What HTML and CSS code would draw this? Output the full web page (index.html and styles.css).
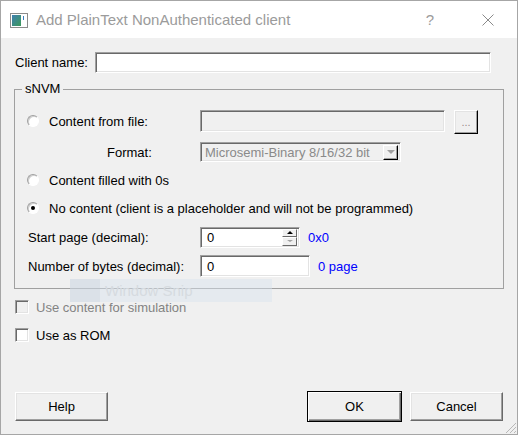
FILE: index.html
```html
<!DOCTYPE html>
<html lang="en">
<head>
  <meta charset="UTF-8">
  <title>Add PlainText NonAuthenticated client</title>
  <link rel="stylesheet" href="styles.css">
</head>
<body>

<div class="window">
  <div class="titlebar">
    <svg class="app-icon" width="18" height="15" viewBox="0 0 18 15">
      <defs>
        <linearGradient id="ig" x1="0" y1="0" x2="1" y2="1">
          <stop offset="0" stop-color="#3f7fb0"/>
          <stop offset="1" stop-color="#3c9a5a"/>
        </linearGradient>
      </defs>
      <rect x="0.5" y="0.5" width="17" height="14" fill="#fff" stroke="#8c8c8c"/>
      <rect x="2" y="2" width="9" height="11" fill="url(#ig)"/>
      <rect x="13" y="3" width="1" height="4" fill="#3a7fc0"/>
    </svg>
    <span class="title">Add PlainText NonAuthenticated client</span>
    <span class="help-btn">?</span>
    <svg class="close-btn" width="12" height="12" viewBox="0 0 12 12">
      <path d="M0.5 0.5 L11.5 11.5 M11.5 0.5 L0.5 11.5" stroke="#8a8a8a" stroke-width="1" fill="none"/>
    </svg>
  </div>

  <div class="client">
    <div class="name-row">
      <label class="name-label">Client name:</label>
      <input type="text" class="field name-field" value="">
    </div>

    <fieldset class="group">
      <legend>sNVM</legend>

      <div class="row row-file">
        <div class="lead"><span class="radio"></span>Content from file:</div>
        <div class="field file-field"></div>
        <div class="btn browse">...</div>
      </div>

      <div class="row row-format">
        <div class="lead indent">Format:</div>
        <div class="field combo">
          <span class="combo-text">Microsemi-Binary 8/16/32 bit</span>
          <span class="combo-drop"><span class="tri-down"></span></span>
        </div>
      </div>

      <div class="row row-zero">
        <div class="lead wide"><span class="radio"></span>Content filled with 0s</div>
      </div>

      <div class="row row-none">
        <div class="lead wide"><span class="radio checked"></span>No content (client is a placeholder and will not be programmed)</div>
      </div>

      <div class="row row-start">
        <div class="lead plain">Start page (decimal):</div>
        <div class="field spin">
          <span class="spin-value">0</span>
          <span class="spin-btns">
            <span class="spin-up"><span class="tri-up"></span></span>
            <span class="spin-down"><span class="tri-down small"></span></span>
          </span>
        </div>
        <span class="hint">0x0</span>
      </div>

      <div class="row row-bytes">
        <div class="lead plain">Number of bytes (decimal):</div>
        <div class="field bytes-field">0</div>
        <span class="hint hint-page">0 page</span>
      </div>
    </fieldset>

    <div class="check-row check-sim disabled">
      <span class="checkbox"></span>Use content for simulation
    </div>
    <div class="check-row check-rom">
      <span class="checkbox"></span>Use as ROM
    </div>

    <div class="buttons">
      <div class="btn push help">Help</div>
      <div class="btn push default">OK</div>
      <div class="btn push cancel">Cancel</div>
    </div>
  </div>

  <div class="snip"><span class="snip-edge"></span><span class="snip-text">Window Snip</span></div>

  <svg class="grip" width="12" height="12" viewBox="0 0 12 12">
    <path d="M11 1 L1 11 M11 5 L5 11 M11 9 L9 11" stroke="#b8b8b8" stroke-width="1" fill="none"/>
  </svg>
</div>

</body>
</html>
```

FILE: styles.css
```css
body {
  margin: 0;
  background: #ffffff;
}

.window {
  position: relative;
  width: 518px;
  height: 435px;
  box-sizing: border-box;
  border: 1px solid #a6a6a6;
  display: flex;
  flex-direction: column;
  font-family: "Liberation Sans", Arial, sans-serif;
  font-size: 13px;
  color: #000;
  overflow: hidden;
}

/* title bar */
.titlebar {
  height: 37px;
  flex: none;
  background: #fff;
  display: flex;
  align-items: center;
  padding-left: 9px;
}

.app-icon {
  margin-right: 8px;
  margin-top: 1px;
}

.title {
  font-size: 15px;
  color: #9b9b9b;
  flex: 1;
}

.help-btn {
  font-size: 15px;
  color: #9b9b9b;
  margin-right: 48px;
}

.close-btn {
  margin-right: 23px;
}

/* client area */
.client {
  flex: 1;
  background: #f0f0f0;
  padding: 14px 14px 12px 14px;
  display: flex;
  flex-direction: column;
}

.field {
  box-sizing: border-box;
  border: 1px solid;
  border-color: #a0a0a0 #fff #fff #a0a0a0;
  box-shadow: inset 1px 1px #696969, inset -1px -1px #e3e3e3;
  background: #fff;
  font: inherit;
}

.name-row {
  display: flex;
  align-items: center;
}

.name-label {
  width: 80px;
}

.name-field {
  width: 396px;
  height: 21px;
  padding: 0 4px;
  outline: none;
}

/* group box */
.group {
  margin: 9px -1px 0 -1px;
  padding: 0 12px 8px 12px;
  border: 1px solid #a0a0a0;
  min-width: 0;
}

.group legend {
  line-height: 14px;
  padding: 0 3px;
  margin-left: -5px;
}

.row {
  display: flex;
  align-items: center;
  height: 28px;
}

.row-file { margin-top: 11px; }
.row-format { margin-top: 3px; }
.row-start { margin-top: 1px; }
.row-bytes { margin-top: 1px; }

.lead {
  width: 173px;
  flex: none;
  display: flex;
  align-items: center;
}

.lead.wide {
  width: auto;
}

.lead.indent {
  padding-left: 80px;
  box-sizing: border-box;
}

.lead.plain {
  padding-left: 1px;
  box-sizing: border-box;
}

.radio {
  width: 12px;
  height: 12px;
  box-sizing: border-box;
  border-radius: 50%;
  border: 1px solid;
  border-color: #a0a0a0 #fff #fff #a0a0a0;
  box-shadow: inset 1px 1px #cfcfcf;
  background: #fff;
  margin-right: 10px;
  position: relative;
}

.radio.checked::after {
  content: "";
  position: absolute;
  left: 3px;
  top: 3px;
  width: 4px;
  height: 4px;
  border-radius: 50%;
  background: #000;
}

.file-field {
  width: 245px;
  height: 22px;
  background: #f0f0f0;
}

.btn {
  box-sizing: border-box;
  background: #f0f0f0;
  border: 1px solid;
  border-color: #fff #696969 #696969 #fff;
  box-shadow: inset -1px -1px #a0a0a0, inset 1px 1px #e3e3e3;
  display: flex;
  align-items: center;
  justify-content: center;
}

.browse {
  width: 24px;
  height: 24px;
  margin-left: 9px;
  color: #9a8a8a;
  border-right-color: #000;
  border-bottom-color: #000;
  font-size: 11px;
  margin-top: 2px;
}

.combo {
  width: 201px;
  height: 20px;
  background: #f0f0f0;
  display: flex;
  align-items: center;
  justify-content: space-between;
  padding: 0 2px 0 4px;
}

.combo-text {
  color: #8a8a8a;
}

.combo-drop {
  width: 15px;
  height: 15px;
  box-sizing: border-box;
  border: 1px solid;
  border-color: #fff #000 #000 #fff;
  box-shadow: inset -1px -1px #a0a0a0;
  display: flex;
  align-items: center;
  justify-content: center;
}

.tri-down {
  width: 0;
  height: 0;
  border-left: 4px solid transparent;
  border-right: 4px solid transparent;
  border-top: 4px solid #a0a0a0;
}

.tri-down.small {
  border-left-width: 3px;
  border-right-width: 3px;
  border-top: 2px solid #a0a0a0;
}

.tri-up {
  width: 0;
  height: 0;
  border-left: 3px solid transparent;
  border-right: 3px solid transparent;
  border-bottom: 3px solid #000;
}

.spin {
  width: 100px;
  height: 21px;
  display: flex;
  align-items: center;
  justify-content: space-between;
  padding: 2px 2px 2px 6px;
}

.spin-btns {
  display: flex;
  flex-direction: column;
  width: 15px;
  height: 17px;
}

.spin-up,
.spin-down {
  flex: 1;
  box-sizing: border-box;
  border: 1px solid;
  border-color: #fff #696969 #696969 #fff;
  background: #f0f0f0;
  display: flex;
  align-items: center;
  justify-content: center;
}

.bytes-field {
  width: 110px;
  height: 22px;
  display: flex;
  align-items: center;
  padding-left: 6px;
}

.hint {
  color: #0000ff;
  margin-left: 8px;
}

/* checkboxes */
.check-row {
  display: flex;
  align-items: center;
  height: 20px;
  margin-top: 8px;
}

.checkbox {
  width: 14px;
  height: 14px;
  box-sizing: border-box;
  border: 1px solid;
  border-color: #a0a0a0 #fff #fff #a0a0a0;
  box-shadow: inset 1px 1px #696969, inset -1px -1px #e3e3e3;
  background: #fff;
  margin-right: 7px;
}

.check-row.disabled {
  color: #838383;
}

.check-row.disabled .checkbox {
  background: #f0f0f0;
}

/* dialog buttons */
.buttons {
  margin-top: auto;
  display: flex;
  align-items: center;
}

.push {
  width: 93px;
  height: 29px;
}

.help {
  margin-right: auto;
}

.default {
  width: 95px;
  height: 31px;
  border: 1px solid #000;
  box-shadow: inset 1px 1px #fff, inset -1px -1px #696969, inset -2px -2px #a0a0a0;
}

.cancel {
  margin-left: 8px;
}

/* snipping tool ghost */
.snip {
  position: absolute;
  left: 69px;
  top: 278px;
  width: 202px;
  height: 23px;
  display: flex;
  align-items: center;
  background: rgba(214, 226, 238, 0.45);
}

.snip-edge {
  width: 30px;
  height: 100%;
  background: rgba(190, 200, 212, 0.25);
}

.snip-text {
  margin-left: 5px;
  font-size: 15px;
  color: #d6dbe0;
}

.grip {
  position: absolute;
  right: 0;
  bottom: 0;
}
```
